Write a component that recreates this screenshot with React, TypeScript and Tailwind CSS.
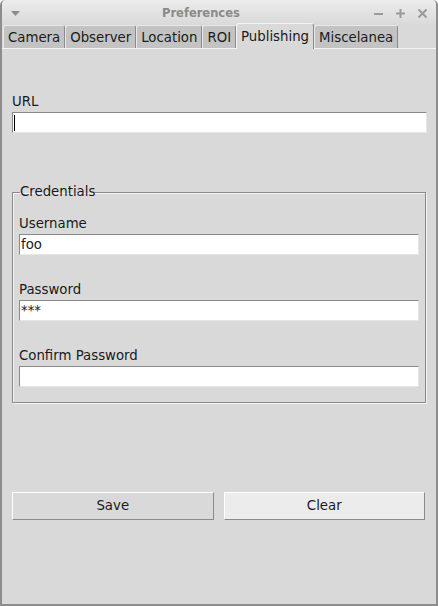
import React from 'react';

const tabs = ['Camera', 'Observer', 'Location', 'ROI', 'Publishing', 'Miscelanea'];

function Entry({ value, caret }: { value?: string; caret?: boolean }) {
  return (
    <div className="flex h-[21px] items-center border-t border-l border-[#8a8a8a] border-b border-r border-b-[#e6e6e6] border-r-[#e6e6e6] bg-white pl-[1px] text-[13.3px] leading-none text-[#1a1a1a]">
      {caret && <div className="h-[16px] w-px bg-black" />}
      {value}
    </div>
  );
}

function Field({ label, value }: { label: string; value?: string }) {
  return (
    <div className="flex flex-col">
      <div className="h-[20px] text-[13.3px] leading-[20px] text-[#1a1a1a]">{label}</div>
      <Entry value={value} />
    </div>
  );
}

export default function App() {
  return (
    <div className="flex h-[606px] w-[438px] flex-col overflow-hidden rounded-t-[5px] border-x-2 border-b-2 border-[#8d8d8d] bg-[#d9d9d9] font-['DejaVu_Sans','Liberation_Sans',sans-serif]">
      {/* title bar */}
      <div className="flex h-[24px] items-center bg-gradient-to-b from-[#ececec] to-[#dadada] pt-[3px]">
        <svg width="9" height="6" viewBox="0 0 9 6" className="ml-[9px]">
          <path d="M0 0 L9 0 L4.5 5 Z" fill="#8c8c8c" />
        </svg>
        <div className="ml-[142px] text-[11.5px] font-bold text-[#8a8a8a]">Preferences</div>
        <div className="ml-auto mr-[8px] flex items-center gap-[11px] text-[#9a9a9a]">
          <svg width="11" height="11" viewBox="0 0 11 11">
            <path d="M1 6 H10" stroke="currentColor" strokeWidth="2" />
          </svg>
          <svg width="11" height="11" viewBox="0 0 11 11">
            <path d="M1 5.5 H10 M5.5 1 V10" stroke="currentColor" strokeWidth="2" />
          </svg>
          <svg width="11" height="11" viewBox="0 0 11 11">
            <path d="M1.5 1.5 L9.5 9.5 M9.5 1.5 L1.5 9.5" stroke="currentColor" strokeWidth="2" />
          </svg>
        </div>
      </div>

      {/* tabs */}
      <div className="flex h-[24px] items-end pl-[1px]">
        {tabs.map((t) => {
          const active = t === 'Publishing';
          return (
            <div
              key={t}
              className={
                active
                  ? 'relative z-10 -mb-px flex h-[26px] items-center rounded-t-[3px] border-t border-l border-r border-t-[#f4f4f4] border-l-[#f4f4f4] border-r-[#8a8a8a] bg-[#d9d9d9] px-[4px] pt-[1px] text-[13.3px] text-[#1a1a1a]'
                  : 'flex h-[23px] items-center rounded-t-[3px] border-t border-l border-r border-t-[#e8e8e8] border-l-[#e8e8e8] border-r-[#8a8a8a] bg-[#c3c3c3] px-[4px] pt-[1px] text-[13.3px] text-[#1a1a1a]'
              }
            >
              {t}
            </div>
          );
        })}
      </div>

      {/* panel */}
      <div className="flex flex-1 flex-col border-t border-[#f4f4f4] px-[10px] pt-[43px]">
        <div className="h-[20px] text-[13.3px] leading-[20px] text-[#1a1a1a]">URL</div>
        <div className="mr-[-1px]">
          <Entry caret />
        </div>

        <fieldset className="mt-[51px] border border-[#8a8a8a] px-[6px] pb-[15px] shadow-[inset_1px_1px_0_#f4f4f4,1px_1px_0_#f4f4f4]">
          <legend className="ml-[1px] h-[16px] text-[13.3px] leading-[16px] text-[#1a1a1a]">Credentials</legend>
          <div className="mt-[14px] flex flex-col gap-[25px]">
            <Field label="Username" value="foo" />
            <Field label="Password" value="***" />
            <Field label="Confirm Password" />
          </div>
        </fieldset>

        <div className="mt-[89px] grid grid-cols-2 gap-[10px] pr-[1px]">
          <button className="h-[28px] border border-t-white border-l-white border-b-[#8a8a8a] border-r-[#8a8a8a] bg-[#d9d9d9] text-[13.3px] text-[#1a1a1a]">
            Save
          </button>
          <button className="h-[28px] border border-t-white border-l-white border-b-[#8a8a8a] border-r-[#8a8a8a] bg-[#ececec] text-[13.3px] text-[#1a1a1a]">
            Clear
          </button>
        </div>
      </div>
    </div>
  );
}
